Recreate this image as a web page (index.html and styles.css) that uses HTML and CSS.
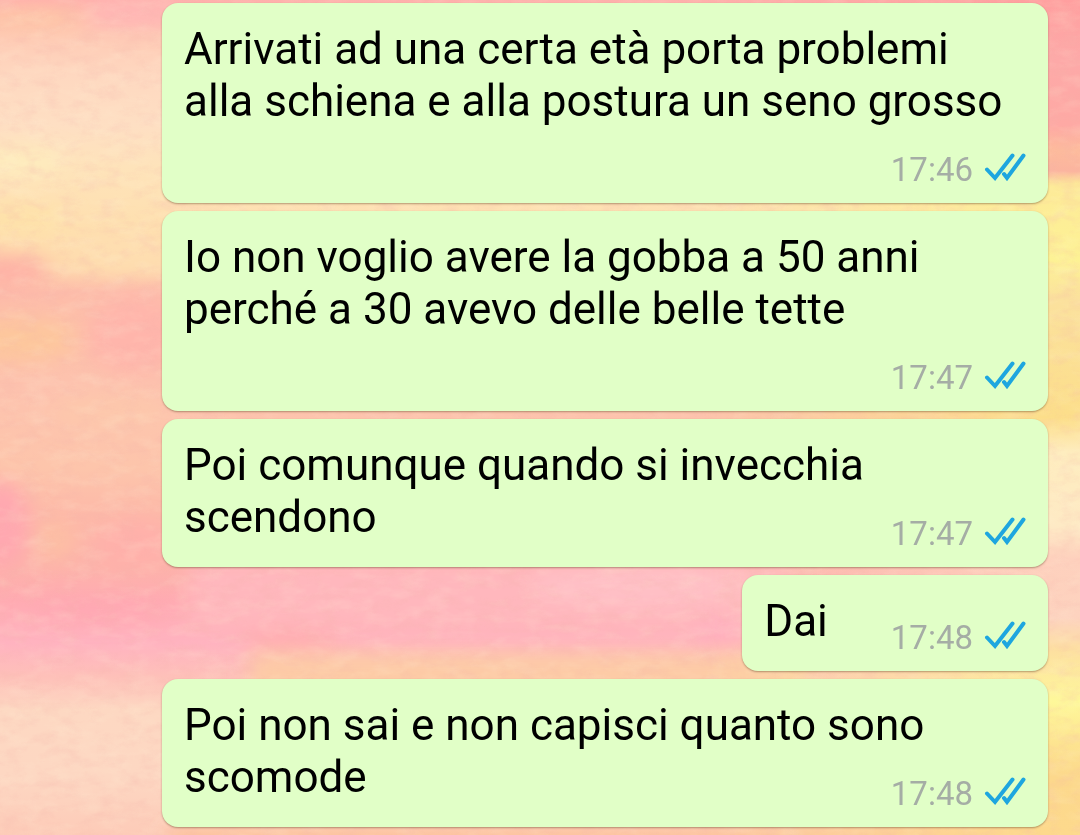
FILE: index.html
```html
<!DOCTYPE html>
<html lang="it">
    <head>
        <meta charset="utf-8">
        <meta name="viewport" content="width=device-width, initial-scale=1">
        <title>Chat</title>
        <link rel="stylesheet" href="styles.css">
    </head>
    <body>
        <svg class="wallpaper" viewBox="0 0 1080 835" preserveAspectRatio="none" aria-hidden="true">
            <defs>
                <linearGradient id="left" x1="0" y1="0" x2="0" y2="1">
                    <stop offset="0" stop-color="#ffb0ac"/>
                    <stop offset=".04" stop-color="#fec9b4"/>
                    <stop offset=".09" stop-color="#fed8c0"/>
                    <stop offset=".15" stop-color="#fedfc3"/>
                    <stop offset=".2" stop-color="#fee3ba"/>
                    <stop offset=".28" stop-color="#fedfae"/>
                    <stop offset=".32" stop-color="#fed8ac"/>
                    <stop offset=".35" stop-color="#fdbcaa"/>
                    <stop offset=".4" stop-color="#fdc1a8"/>
                    <stop offset=".46" stop-color="#fdc2ae"/>
                    <stop offset=".56" stop-color="#fdc5ab"/>
                    <stop offset=".62" stop-color="#fdb8a8"/>
                    <stop offset=".68" stop-color="#fdb2aa"/>
                    <stop offset=".72" stop-color="#ffabb2"/>
                    <stop offset=".77" stop-color="#ffb3c0"/>
                    <stop offset=".81" stop-color="#fec0b9"/>
                    <stop offset=".85" stop-color="#fdd8c2"/>
                    <stop offset=".93" stop-color="#fdd7c2"/>
                    <stop offset="1" stop-color="#fdcbb8"/>
                </linearGradient>
                <linearGradient id="right" x1="0" y1="0" x2="0" y2="1">
                    <stop offset="0" stop-color="#ff9f9f"/>
                    <stop offset=".07" stop-color="#fda9a8"/>
                    <stop offset=".15" stop-color="#fea9a4"/>
                    <stop offset=".18" stop-color="#fdbb9c"/>
                    <stop offset=".205" stop-color="#fbb49f"/>
                    <stop offset=".22" stop-color="#fdea98"/>
                    <stop offset=".31" stop-color="#fdf294"/>
                    <stop offset=".36" stop-color="#fbe19d"/>
                    <stop offset=".5" stop-color="#fcde8a"/>
                    <stop offset=".54" stop-color="#feecbd"/>
                    <stop offset=".63" stop-color="#feeac5"/>
                    <stop offset=".67" stop-color="#fed0bd"/>
                    <stop offset=".74" stop-color="#fdd3bf"/>
                    <stop offset=".78" stop-color="#fde0a0"/>
                    <stop offset=".84" stop-color="#fef89a"/>
                    <stop offset=".89" stop-color="#fde490"/>
                    <stop offset=".93" stop-color="#fcd88c"/>
                    <stop offset="1" stop-color="#fdd98c"/>
                </linearGradient>
                <linearGradient id="fade">
                    <stop offset="0" stop-color="#000"/>
                    <stop offset="1" stop-color="#fff"/>
                </linearGradient>
                <mask id="edge" maskUnits="userSpaceOnUse" x="700" y="0" width="380" height="835">
                    <rect x="700" width="340" height="835" fill="url(#fade)"/>
                    <rect x="1040" width="40" height="835" fill="#fff"/>
                </mask>
                <filter id="soft" x="-50%" y="-50%" width="200%" height="200%">
                    <feGaussianBlur stdDeviation="10"/>
                </filter>
                <filter id="grain" x="0" y="0" width="100%" height="100%">
                    <feTurbulence type="fractalNoise" baseFrequency=".05 .09" numOctaves="4" seed="4"/>
                    <feColorMatrix values="0 0 0 0 .9  0 0 0 0 .45  0 0 0 0 .4  1.8 0 0 0 -.8"/>
                </filter>
                <filter id="light" x="0" y="0" width="100%" height="100%">
                    <feTurbulence type="fractalNoise" baseFrequency=".04 .08" numOctaves="4" seed="11"/>
                    <feColorMatrix values="0 0 0 0 1  0 0 0 0 .92  0 0 0 0 .7  1.8 0 0 0 -.8"/>
                </filter>
            </defs>
            <rect width="1080" height="835" fill="url(#left)"/>
            <g filter="url(#soft)">
                <ellipse cx="30" cy="18" rx="60" ry="8" fill="#fdc8a2"/>
                <ellipse cx="135" cy="14" rx="50" ry="12" fill="#ffb6b6"/>
                <ellipse cx="20" cy="162" rx="44" ry="14" fill="#feedbe"/>
                <ellipse cx="20" cy="218" rx="50" ry="12" fill="#fee2a8"/>
                <ellipse cx="5" cy="272" rx="46" ry="16" fill="#feb0a6"/>
                <ellipse cx="125" cy="250" rx="60" ry="20" fill="#fedeb0"/>
                <ellipse cx="15" cy="340" rx="60" ry="20" fill="#fdc79c"/>
                <ellipse cx="135" cy="335" rx="50" ry="38" fill="#ffb5ab"/>
                <ellipse cx="110" cy="412" rx="60" ry="18" fill="#fdc8ac"/>
                <ellipse cx="0" cy="525" rx="30" ry="44" fill="#ffa8b0"/>
                <ellipse cx="135" cy="545" rx="40" ry="24" fill="#ffb0aa"/>
                <ellipse cx="55" cy="540" rx="20" ry="20" fill="#fdbfa4"/>
                <ellipse cx="100" cy="612" rx="70" ry="8" fill="#ffa6b2"/>
                <!-- band between the short bubble and the left edge -->
                <rect x="190" y="560" width="600" height="70" fill="#ffb7bd"/>
                <ellipse cx="640" cy="585" rx="110" ry="22" fill="#ffc0c6"/>
                <ellipse cx="290" cy="638" rx="50" ry="6" fill="#ffa5a8"/>
                <rect x="250" y="652" width="560" height="60" fill="#fdcba6"/>
                <ellipse cx="725" cy="632" rx="26" ry="14" fill="#ffabc0"/>
                <rect x="170" y="832" width="900" height="20" fill="#fdc090"/>
            </g>
            <rect x="700" width="380" height="835" fill="url(#right)" mask="url(#edge)"/>
            <rect width="1080" height="835" filter="url(#grain)" opacity=".3"/>
            <rect width="1080" height="835" filter="url(#light)" opacity=".2"/>
        </svg>
        <svg class="sprite" aria-hidden="true">
            <symbol id="read" viewBox="0 0 42 30">
                <path d="M3 17.500L11 26L28.500 3.500M20 22L23 26L39.500 3.500"/>
            </symbol>
        </svg>
        <main class="chat">
            <div class="bubble">
                Arrivati ad una certa età porta problemi alla schiena e alla postura un seno grosso
                <span class="meta"><time>17:46</time><svg class="ticks" role="img" aria-label="Letto"><use href="#read"/></svg></span>
            </div>
            <div class="bubble">
                Io non voglio avere la gobba a 50 anni perché a 30 avevo delle belle tette
                <span class="meta"><time>17:47</time><svg class="ticks" role="img" aria-label="Letto"><use href="#read"/></svg></span>
            </div>
            <div class="bubble">
                Poi comunque quando si invecchia scendono
                <span class="meta"><time>17:47</time><svg class="ticks" role="img" aria-label="Letto"><use href="#read"/></svg></span>
            </div>
            <div class="bubble">
                Dai
                <span class="meta"><time>17:48</time><svg class="ticks" role="img" aria-label="Letto"><use href="#read"/></svg></span>
            </div>
            <div class="bubble">
                Poi non sai e non capisci quanto sono scomode
                <span class="meta"><time>17:48</time><svg class="ticks" role="img" aria-label="Letto"><use href="#read"/></svg></span>
            </div>
        </main>
    </body>
</html>
```
FILE: styles.css
```css
*{
    box-sizing: border-box;
}
body{
    margin: 0;
    font-family: Roboto, "Liberation Sans", sans-serif;
    background-color: #fdc9b4;
}
.wallpaper{
    position: fixed;
    inset: 0;
    width: 100%;
    height: 100%;
    z-index: -1;
}
.sprite{
    display: none;
}
.chat{
    display: flex;
    flex-direction: column;
    align-items: flex-end;
    gap: 8px;
    padding: 3px 32px 7px 15%;
}
.bubble{
    display: flow-root;
    padding: 20px 22px 13px;
    border-radius: 16px;
    background-color: #e1ffc7;
    box-shadow: 0 1px 2px rgba(90, 60, 30, .45);
    color: #000;
    font-size: 44px;
    line-height: 52px;
}
/* the float drops under the text when the last line is too long */
.meta{
    float: right;
    display: flex;
    align-items: flex-start;
    gap: 11px;
    margin-left: 63px;
    padding-top: 23px;
    color: #a5ada5;
    font-size: 33px;
    line-height: 40px;
}
.ticks{
    width: 42px;
    height: 30px;
    margin-top: 2px;
    fill: none;
    stroke: #1ea6df;
    stroke-width: 4;
    stroke-linejoin: miter;
    stroke-linecap: round;
}
```
